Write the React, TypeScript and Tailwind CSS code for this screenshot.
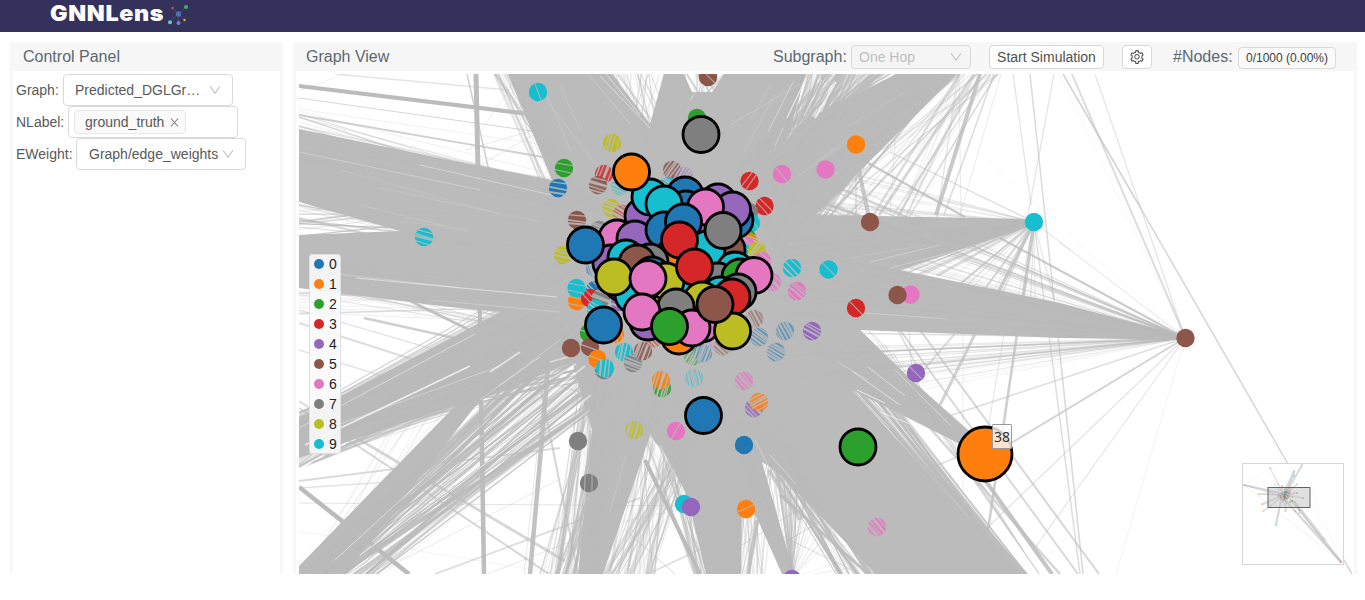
import React from "react";

const PALETTE = ["#1f77b4", "#ff7f0e", "#2ca02c", "#d62728", "#9467bd", "#8c564b", "#e377c2", "#7f7f7f", "#bcbd22", "#17becf"];
const EDGE = "#bbbbbb";

function createRandom(seed: number) {
  let s = seed;
  return () => {
    s = (s * 1664525 + 1013904223) % 4294967296;
    return s / 4294967296;
  };
}

type Line = [number, number, number, number, number, number];
type Segment = [number, number, number, number];

/* Edges running between random points of two segments. */
function bundle(a: Segment, b: Segment, count: number, seed: number, maxWidth = 2, maxOpacity = 0.8): Line[] {
  const r = createRandom(seed);
  for (let i = 0; i < 5; i++) r();
  return Array.from({ length: count }, () => {
    const t = r();
    const u = r();
    return [
      a[0] + (a[2] - a[0]) * t,
      a[1] + (a[3] - a[1]) * t,
      b[0] + (b[2] - b[0]) * u,
      b[1] + (b[3] - b[1]) * u,
      0.5 + r() * r() * maxWidth,
      0.15 + r() * maxOpacity,
    ] as Line;
  });
}

const MASSES = [
  "299,129 440,158 552,180 508,74 612,74 650,124 664,74 684,74 692,92 712,92 724,74 806,74 786,140 806,120 896,74 957,74 816,215 1034,219 1034,225 900,270 1060,303 1185,336 1185,340 1060,338 860,330 905,374 985,445 972,450 852,390 925,470 1020,574 876,574 778,472 762,462 794,574 782,574 757,518 742,500 741,574 706,574 688,498 668,458 650,436 603,574 578,574 592,430 572,362 480,400 345,574 299,574 299,566 456,405 299,458 299,418 500,312 440,306 299,288 299,235 400,231 299,202",
];

const LINES: Line[] = [
  ...bundle([299, 108, 299, 165], [600, 185, 600, 225], 34, 3, 2, 0.6),
  ...bundle([299, 198, 299, 240], [560, 190, 560, 285], 18, 4, 2.4),
  ...bundle([299, 250, 299, 315], [600, 280, 600, 350], 46, 5, 1.8, 0.6),
  ...bundle([299, 412, 299, 470], [600, 240, 600, 320], 70, 6, 3.4),
  ...bundle([299, 420, 299, 455], [610, 260, 610, 380], 60, 16, 3),
  ...bundle([235, 630, 290, 630], [590, 290, 600, 350], 60, 7, 4),
  ...bundle([240, 630, 315, 630], [610, 340, 610, 400], 55, 8, 3),
  ...bundle([230, 640, 310, 640], [420, 365, 470, 395], 14, 80, 1, 0.3),
  ...bundle([299, 470, 380, 425], [600, 320, 600, 380], 30, 84, 2.4, 0.5),
  ...bundle([555, 574, 603, 574], [580, 350, 660, 350], 48, 9, 4),
  ...bundle([540, 574, 575, 574], [585, 350, 610, 350], 12, 82, 2, 0.5),
  ...bundle([600, 574, 655, 574], [635, 400, 725, 400], 62, 10, 3, 0.5),
  ...bundle([692, 574, 712, 574], [630, 400, 680, 400], 26, 11, 3),
  ...bundle([738, 574, 765, 574], [725, 420, 785, 420], 22, 12, 2, 0.5),
  ...bundle([788, 574, 794, 574], [700, 380, 820, 420], 42, 13, 2, 0.7),
  ...bundle([791, 578, 792, 578], [780, 450, 870, 574], 16, 14, 1, 0.4),
  ...bundle([835, 574, 880, 574], [740, 420, 800, 450], 42, 15, 4),
  ...bundle([1010, 574, 1028, 574], [790, 330, 870, 370], 65, 17, 3),
  ...bundle([982, 448, 995, 465], [800, 270, 840, 380], 75, 18, 2, 0.7),
  ...bundle([960, 460, 1085, 640], [840, 300, 910, 370], 12, 19, 2, 0.5),
  ...bundle([1034, 222, 1034, 223], [770, 150, 780, 215], 14, 20, 1.2, 0.35),
  ...bundle([1034, 222, 1034, 223], [770, 215, 780, 345], 40, 85, 2, 0.5),
  ...bundle([1034, 222, 1034, 223], [900, 265, 1070, 315], 16, 21, 3, 0.5),
  ...bundle([1185, 338, 1185, 338], [770, 145, 770, 400], 66, 22, 2, 0.4),
  ...bundle([1185, 338, 1185, 338], [860, 330, 860, 402], 16, 23, 1, 0.35),
  ...bundle([955, 74, 1000, 74], [750, 235, 940, 250], 30, 24, 3, 0.45),
  ...bundle([915, 74, 958, 74], [760, 220, 830, 220], 60, 25, 2, 0.7),
  ...bundle([800, 74, 880, 74], [730, 170, 785, 260], 110, 26, 4, 0.7),
  ...bundle([750, 150, 790, 170], [830, 66, 940, 50], 34, 83, 3, 0.7),
  ...bundle([494, 74, 515, 74], [540, 190, 595, 210], 24, 27, 3, 0.6),
  ...bundle([608, 74, 666, 74], [620, 150, 680, 150], 32, 28, 2, 0.6),
  ...bundle([680, 74, 728, 74], [670, 115, 740, 115], 24, 29, 2, 0.6),
  ...bundle([855, 215, 870, 217], [780, 170, 830, 250], 10, 30, 1, 0.5),
  [299, 86, 545, 116, 4.2, 1], [299, 98, 560, 135, 1, 0.6], [335, 74, 508, 90, 1.5, 0.4],
  [299, 115, 560, 160, 1.8, 0.7], [299, 109, 560, 147, 0.7, 0.3], [345, 74, 299, 91, 1, 0.2],
  [476, 74, 479, 220, 5, 0.95], [479, 220, 480, 330, 4, 1], [480, 330, 484, 574, 4.5, 0.95],
  [467, 74, 491, 180, 1.5, 0.7], [520, 74, 478, 135, 1, 0.25], [480, 165, 560, 120, 1, 0.3],
  [465, 150, 545, 127, 1, 0.3], [299, 222, 365, 213, 2, 0.7], [299, 220, 398, 232, 2, 0.6],
  [299, 487, 409, 574, 4.5, 1], [548, 370, 530, 574, 4.5, 0.9],
  [350, 434, 565, 561, 2.8, 0.6], [340, 434, 549, 574, 2, 0.6], [540, 385, 578, 574, 2, 0.6],
  [299, 503, 699, 506, 1, 0.4], [299, 481, 560, 448, 1.8, 0.55], [299, 488, 420, 480, 1.6, 0.4],
  [435, 574, 640, 498, 2, 0.45], [375, 574, 558, 480, 1, 0.3], [480, 577, 620, 522, 1, 0.35],
  [299, 323, 430, 365, 2, 0.5], [364, 318, 600, 370, 2.4, 0.7], [299, 310, 580, 392, 1.4, 0.4],
  [299, 350, 440, 394, 1.4, 0.4], [299, 401, 355, 438, 2, 0.5], [299, 408, 350, 442, 1.8, 0.6],
  [524, 574, 545, 380, 1, 0.35], [299, 531, 558, 574, 1, 0.15], [400, 296, 490, 340, 3, 0.9],
  [980, 74, 936, 215, 4, 0.8], [974, 74, 879, 215, 2.5, 0.6], [994, 74, 944, 215, 1.6, 0.5],
  [1001, 74, 960, 215, 1, 0.3], [959, 74, 961, 216, 1, 0.3],
  [1013, 74, 1031, 205, 1.3, 0.4], [1030, 74, 1054, 300, 1.5, 0.55], [1054, 74, 1028, 215, 1.3, 0.4],
  [1063, 74, 1140, 207, 1.6, 0.65], [1140, 207, 1288, 464, 1.5, 0.6], [1288, 464, 1352, 574, 1.6, 0.6],
  [1072, 74, 1183, 332, 2, 0.5], [1095, 74, 1183, 332, 1.2, 0.4], [1059, 74, 1183, 332, 0.8, 0.15],
  [1060, 242, 1185, 338, 1, 0.4], [1034, 222, 1070, 250, 1, 0.4], [942, 120, 1185, 338, 0.7, 0.15],
  [868, 163, 965, 217, 2.2, 0.8], [1000, 238, 1185, 338, 2.2, 0.75], [890, 152, 1034, 222, 1.2, 0.5],
  [855, 152, 869, 218, 4, 0.8], [856, 152, 856, 218, 2, 0.4], [895, 140, 890, 216, 1, 0.3],
  [1034, 222, 1023, 298, 3.5, 0.75], [1034, 222, 999, 291, 3.5, 0.7], [1034, 222, 984, 290, 2, 0.6],
  [1034, 222, 1044, 300, 1.5, 0.5], [1034, 222, 1035, 300, 1, 0.35], [1034, 222, 960, 284, 2, 0.5],
  [1185, 338, 940, 419, 1.8, 0.45], [1185, 338, 1008, 445, 1.8, 0.65], [1185, 338, 988, 527, 1.2, 0.4],
  [1185, 338, 1035, 548, 1.1, 0.4], [1185, 338, 1116, 574, 1, 0.18], [1185, 338, 905, 385, 1, 0.35],
  [1049, 335, 1080, 574, 1.5, 0.5], [1058, 335, 1083, 574, 1.6, 0.55], [1017, 334, 988, 530, 2.6, 0.7],
  [1004, 334, 984, 453, 1, 0.4], [977, 330, 940, 405, 3, 0.65], [958, 330, 915, 380, 2, 0.5],
  [920, 330, 1099, 574, 2, 0.6], [900, 330, 1078, 574, 1.8, 0.6], [985, 480, 1052, 574, 4, 0.85],
  [905, 400, 1060, 574, 2.5, 0.6], [963, 330, 963, 490, 1, 0.25], [898, 330, 920, 372, 1.4, 0.6],
  [909, 330, 912, 372, 1, 0.5], [925, 470, 970, 452, 1.4, 0.5],
  [645, 460, 700, 574, 4, 1], [622, 522, 700, 505, 1, 0.3], [625, 530, 675, 574, 1, 0.5],
  [757, 520, 748, 574, 4, 0.8], [648, 574, 720, 540, 1.5, 0.5], [742, 545, 800, 508, 1, 0.5],
  [780, 495, 868, 574, 3, 0.9], [776, 470, 780, 560, 1, 0.5], [780, 545, 840, 510, 1.4, 0.5],
  [780, 535, 860, 574, 1, 0.5], [769, 470, 800, 520, 4, 0.7],
  [590, 430, 576, 574, 2, 0.6], [581, 430, 558, 574, 3, 0.6],
];

/* Thin gaps where the white background shows through the dense edges. */
const GAPS: Line[] = [
  [356, 278, 557, 297, 0.8, 0.65], [320, 272, 460, 288, 0.6, 0.4], [430, 300, 560, 312, 0.6, 0.4],
  [380, 188, 540, 222, 0.6, 0.22], [340, 170, 500, 214, 0.5, 0.2], [360, 205, 470, 232, 0.5, 0.25],
  [300, 152, 480, 190, 0.7, 0.4], [420, 165, 556, 196, 0.8, 0.45], [400, 222, 446, 226, 0.5, 0.2],
  [535, 85, 600, 170, 0.5, 0.25], [560, 85, 580, 130, 0.5, 0.25], [547, 95, 570, 150, 0.5, 0.3],
  [600, 76, 650, 128, 1, 0.5], [606, 74, 640, 115, 1, 0.5], [590, 76, 630, 124, 0.6, 0.4],
  [730, 125, 800, 84, 0.6, 0.3], [745, 150, 775, 95, 0.5, 0.3], [793, 82, 768, 132, 0.7, 0.5],
  [770, 86, 750, 120, 0.5, 0.3], [690, 100, 700, 86, 1, 0.4], [797, 177, 850, 137, 0.5, 0.3],
  [806, 78, 787, 118, 1.2, 0.7], [836, 82, 815, 118, 2, 0.7], [822, 80, 804, 116, 0.9, 0.6], [783, 128, 775, 146, 0.7, 0.5],
  [820, 160, 865, 132, 0.5, 0.25], [850, 125, 905, 92, 0.5, 0.2], [865, 313, 948, 319, 0.6, 0.4],
  [850, 258, 925, 245, 0.5, 0.25], [870, 262, 940, 245, 0.7, 0.4], [890, 268, 960, 250, 0.7, 0.4],
  [838, 362, 868, 380, 0.6, 0.5], [852, 371, 900, 405, 0.9, 0.6], [868, 367, 905, 396, 0.8, 0.6],
  [895, 370, 950, 425, 0.8, 0.5], [868, 405, 890, 428, 0.9, 0.6], [857, 390, 885, 403, 1, 0.7],
  [880, 412, 910, 424, 1, 0.6], [755, 440, 770, 470, 0.8, 0.4], [770, 455, 796, 484, 0.7, 0.5],
  [626, 455, 610, 512, 0.6, 0.3], [660, 445, 686, 500, 0.8, 0.5], [650, 434, 661, 455, 0.8, 0.5],
  [305, 445, 470, 366, 1.5, 0.75], [299, 428, 475, 334, 0.9, 0.5], [340, 424, 500, 366, 0.8, 0.4],
  [335, 560, 490, 418, 0.8, 0.6], [360, 555, 540, 424, 1, 0.7], [410, 495, 520, 405, 0.8, 0.4],
  [490, 372, 520, 352, 1.6, 0.6], [499, 386, 540, 357, 0.9, 0.5], [550, 362, 575, 355, 1.5, 0.5],
  [549, 380, 576, 364, 2, 0.5], [552, 392, 585, 366, 1.6, 0.5], [555, 424, 591, 395, 2, 0.5],
  [549, 440, 590, 410, 1.2, 0.4], [480, 400, 560, 340, 0.7, 0.4],
];

/* x, y, class, then optional stripe angle and number of stripes */
type Dot = [number, number, number, number?, number?];
const DOTS: Dot[] = [
  [538, 92, 9, 70, 1], [708, 77, 5, 45, 1], [697, 118, 2], [612, 143, 8, 105, 4], [564, 168, 2, 10, 2],
  [558, 188, 0, 8, 3], [620, 186, 9, 20, 7], [604, 174, 3, 110, 5], [598, 185, 5, 15, 5], [672, 170, 5, 125, 5],
  [684, 176, 4, 120, 8], [668, 186, 9, 30, 5], [749.5, 181, 3, 125, 2], [782, 174, 6, 50, 1], [825.5, 169.5, 6],
  [856, 144.5, 1], [870, 222, 5], [1034, 222, 9], [764.5, 206, 3, 45, 2], [424, 237, 9, 15, 4],
  [611, 208, 8, 20, 5], [622, 214, 3, 30, 7], [577, 220, 5, 5, 3], [599, 230, 7, 20, 5], [563, 255, 8, 12, 4],
  [595, 268, 0, 70, 7], [749, 212, 7], [751, 223, 9, 60, 2], [747, 238, 2, 35, 4], [749, 242, 1, 20, 5],
  [746, 246, 6, 40, 4], [742, 252, 9, 20, 3], [757, 251, 8, 130, 3], [762, 261, 6, 40, 3], [772, 282, 6, 45, 5],
  [792, 268, 9, 45, 3], [828.5, 269.5, 9, 45, 1], [797, 291, 6, 40, 4], [856, 308, 3, 45, 1], [910.5, 294.5, 6], [897.5, 295, 5],
  [1185.5, 338, 5], [916, 373, 4, 45, 1], [595, 290, 0, 45, 3], [577, 301, 1, 10, 2], [590, 298, 3, 45, 2],
  [601, 298, 7, 20, 4], [576.5, 288, 9, 10, 2], [596, 309, 9, 30, 3], [620, 302, 4, 20, 3], [589, 333, 2, 20, 1],
  [590, 347, 5, 20, 1], [571, 348, 5], [615, 334, 1, 80, 4], [597.5, 359, 1, 20, 1], [604, 370, 7, 20, 4],
  [605, 368, 9, 95, 3], [624, 352, 9, 100, 4], [633, 363, 7, 20, 5], [643, 351, 5, 110, 6], [654, 338, 3, 45, 8],
  [754, 319, 5, 60, 7], [718, 341, 6, 50, 7], [723, 346, 5, 40, 8], [693, 356, 2, 120, 8], [703, 353, 0, 110, 9],
  [759, 337, 0, 35, 8], [785, 331, 0, 60, 7], [776, 352, 0, 30, 8], [812, 331, 4, 28, 4],
  [662, 388, 2, 105, 6], [661, 380, 1, 105, 5], [694, 378, 9, 75, 10], [744, 381, 6, 50, 6], [634, 430, 8, 105, 6],
  [676, 431, 6, 120, 1], [754, 408, 4, 45, 5], [759, 402, 1, 150, 5], [744, 445, 0], [578, 441, 7],
  [589, 483, 7, 90, 2], [684, 504, 9], [691, 507, 4], [746, 509, 1, 155, 1], [877, 527, 6, 50, 6], [792, 579, 4],
];

const SELECTED: [number, number, number, number?][] = [
  [675, 235, 3], [655, 300, 8], [700, 250, 1], [718, 260, 5], [640, 287, 5], [690, 312, 9],
  [685, 195, 0], [718, 202, 4], [735, 220, 0], [686, 209, 0], [727, 250, 5], [643, 216, 4], [732.5, 210, 4],
  [650, 197, 9], [664, 204, 9], [693, 232, 4], [705.5, 207, 6], [617, 238, 6], [611, 263, 4], [635, 239, 4],
  [664, 230, 0], [683.5, 222, 0], [673, 257, 1], [707, 249, 9], [723, 230.5, 7], [679.5, 240, 3], [631.5, 172, 1],
  [701, 134.5, 7], [585.5, 245, 0], [626, 258, 9], [650, 262, 7], [622, 283, 5], [637, 263, 5],
  [735, 270, 9], [718, 281, 7], [740, 277, 2], [754, 275.5, 6], [720, 295, 9],
  [633, 295, 9], [614, 277, 8], [677, 292, 9], [652, 275, 0], [666, 281, 8], [648, 278.5, 6],
  [694.5, 267, 3], [702, 300, 8], [738, 292, 7], [732, 297, 3], [679, 336, 1], [648, 322, 4], [702, 324, 6],
  [676, 307, 7], [692, 328, 6], [642, 312, 6], [669.5, 326.5, 2], [732.5, 331, 8], [715, 304.5, 5],
  [603.5, 325, 0], [703.5, 415.5, 0], [858, 447, 2], [985, 454, 1, 27],
];

function drawLines(lines: Line[], color: string) {
  return lines.map(([x1, y1, x2, y2, w, o], i) => (
    <line key={i} x1={x1} y1={y1} x2={x2} y2={y2} stroke={color} strokeWidth={w} strokeOpacity={o} />
  ));
}

function NodeDot({ dot, id }: { dot: Dot; id: string }) {
  const [x, y, c, angle, stripes = 0] = dot;
  const step = 18 / (stripes + 1);
  const opacity = stripes > 6 ? 0.55 : stripes > 4 ? 0.85 : 1;
  return (
    <g>
      <circle cx={x} cy={y} r={9.2} fill={PALETTE[c]} opacity={opacity} />
      {stripes > 0 && (
        <g clipPath={`url(#${id})`}>
          <clipPath id={id}>
            <circle cx={x} cy={y} r={9.6} />
          </clipPath>
          {Array.from({ length: stripes }, (_, i) => {
            const offset = -9 + step * (i + 1) + ((i * 7 + x) % 3) * 0.7 - 0.7;
            return (
              <line
                key={i}
                x1={x - 11}
                x2={x + 11}
                y1={y + offset}
                y2={y + offset + (i % 2)}
                stroke={EDGE}
                strokeOpacity={0.85}
                strokeWidth={stripes > 2 ? 1.2 + (i % 3) * 0.4 : 1}
                transform={`rotate(${angle} ${x} ${y})`}
              />
            );
          })}
        </g>
      )}
    </g>
  );
}

const MINI_RAYS: Line[] = [
  [1288, 495, 1244, 485, 2, 0.6], [1288, 498, 1244, 485, 1, 0.4], [1284, 495, 1270, 468, 1.5, 0.4],
  [1285, 495, 1302, 465, 2, 0.55], [1284, 495, 1294, 472, 3, 0.6], [1284, 495, 1258, 494, 1.5, 0.6],
  [1284, 495, 1263, 504, 2, 0.5], [1284, 495, 1264, 511, 1.5, 0.5], [1282, 495, 1276, 525, 2, 0.6],
  [1284, 495, 1286, 511, 2, 0.5], [1284, 495, 1297, 484, 2, 0.4], [1284, 495, 1303, 498, 1.5, 0.5],
  [1284, 495, 1297, 493, 2, 0.5], [1244, 485, 1341, 562, 0.7, 0.25], [1285, 500, 1341, 562, 2, 0.6],
  [1292, 500, 1341, 562, 3, 0.45], [1287, 495, 1341, 562, 1, 0.5], [1296, 504, 1325, 541, 3.5, 0.3],
  [1270, 468, 1244, 485, 0.5, 0.2], [1302, 465, 1341, 562, 0.5, 0.15],
];

function MiniMap() {
  const r = createRandom(77);
  const core = Array.from({ length: 110 }, () => [1284 + (r() + r() - 1) * 7, 495 + (r() + r() - 1) * 8, Math.floor(r() * 10)]);
  const outer = [[1244, 485, 7], [1270, 468, 7], [1302, 465, 1], [1294, 471, 0], [1294, 476, 9], [1258, 494, 8], [1262, 504, 3], [1263, 511, 1], [1276, 525, 9], [1341, 562, 3], [1275, 485, 9], [1278, 484, 6], [1297, 484, 6], [1282, 486, 3], [1297, 493, 2], [1303, 498, 7], [1285, 511, 1], [1295, 511, 1], [1299, 510, 2], [1299, 513, 9], [1292, 497, 6], [1292, 501, 3], [1295, 502, 1], [1290, 502, 2], [1290, 490, 1]];
  return (
    <g>
      <rect x={1242.5} y={463.5} width={101} height={101} fill="#fff" fillOpacity={0.9} stroke="#d5d5d5" />
      {drawLines(MINI_RAYS, EDGE)}
      <rect x={1268} y={487.5} width={42} height={20} fill="#bbbbbb" fillOpacity={0.45} stroke="#626262" />
      {core.map(([x, y, c], i) => (
        <rect key={i} x={x - 0.5} y={y - 0.5} width={1.1} height={1.1} fill={PALETTE[c]} opacity={0.4} />
      ))}
      {outer.map(([x, y, c], i) => (
        <rect key={i} x={x - 0.5} y={y - 0.5} width={1.2} height={1.2} fill={PALETTE[c]} opacity={0.75} />
      ))}
    </g>
  );
}

function GraphCanvas() {
  return (
    <svg className="block" width="1055" height="500" viewBox="299 74 1055 500">
      {MASSES.map((points, i) => (
        <polygon key={i} points={points} fill={EDGE} />
      ))}
      {drawLines(LINES, EDGE)}
      {drawLines(GAPS, "#ffffff")}
      {DOTS.map((dot, i) => (
        <NodeDot key={i} dot={dot} id={`dot-${i}`} />
      ))}
      {SELECTED.map(([x, y, c, r = 18], i) => (
        <circle key={i} cx={x} cy={y} r={r} fill={PALETTE[c]} stroke="#000" strokeWidth={2.8} />
      ))}
      <MiniMap />
    </svg>
  );
}

function Chevron() {
  return (
    <svg className="shrink-0" width="12" height="12" viewBox="0 0 12 12" fill="none" stroke="#bfbfbf" strokeWidth="1.1">
      <path d="M1.2 2.5 6 9.2l4.8-6.7" />
    </svg>
  );
}

function Gear() {
  return (
    <svg width="14" height="14" viewBox="64 64 896 896" fill="#505050">
      <path d="M924.8 625.7l-65.5-56c3.1-19 4.7-38.4 4.7-57.8s-1.6-38.8-4.7-57.8l65.5-56a32.03 32.03 0 0 0 9.3-35.2l-.9-2.6a443.74 443.74 0 0 0-79.7-137.9l-1.8-2.1a32.12 32.12 0 0 0-35.1-9.5l-81.3 28.9c-30-24.6-63.5-44-99.7-57.6l-15.7-85a32.05 32.05 0 0 0-25.8-25.7l-2.7-.5c-52.1-9.4-106.9-9.4-159 0l-2.7.5a32.05 32.05 0 0 0-25.8 25.7l-15.8 85.4a351.86 351.86 0 0 0-99 57.4l-81.9-29.1a32 32 0 0 0-35.1 9.5l-1.8 2.1a446.02 446.02 0 0 0-79.7 137.9l-.9 2.6c-4.5 12.5-.8 26.5 9.3 35.2l66.3 56.6c-3.1 18.8-4.6 38-4.6 57.1 0 19.2 1.5 38.4 4.6 57.1L99 625.5a32.03 32.03 0 0 0-9.3 35.2l.9 2.6c18.1 50.4 44.9 96.9 79.7 137.9l1.8 2.1a32.12 32.12 0 0 0 35.1 9.5l81.9-29.1c29.8 24.5 63.1 43.9 99 57.4l15.8 85.4a32.05 32.05 0 0 0 25.8 25.7l2.7.5a449.4 449.4 0 0 0 159 0l2.7-.5a32.05 32.05 0 0 0 25.8-25.7l15.7-85a350 350 0 0 0 99.7-57.6l81.3 28.9a32 32 0 0 0 35.1-9.5l1.8-2.1c34.8-41.1 61.6-87.5 79.7-137.9l.9-2.6c4.5-12.3.8-26.3-9.3-35zM788.3 465.9c2.5 15.1 3.8 30.6 3.8 46.1s-1.3 31-3.8 46.1l-6.6 40.1 74.7 63.9a370.03 370.03 0 0 1-42.6 73.6L721 702.8l-31.4 25.8c-23.9 19.6-50.5 35-79.3 45.8l-38.1 14.3-17.9 97a377.5 377.5 0 0 1-85 0l-17.9-97.2-37.8-14.5c-28.5-10.8-55-26.2-78.7-45.7l-31.4-25.9-93.4 33.2c-17-22.9-31.2-47.6-42.6-73.6l75.5-64.5-6.5-40c-2.4-14.9-3.7-30.3-3.7-45.5 0-15.3 1.2-30.6 3.7-45.5l6.5-40-75.5-64.5c11.3-26.1 25.6-50.7 42.6-73.6l93.4 33.2 31.4-25.9c23.7-19.5 50.2-34.9 78.7-45.7l37.9-14.3 17.9-97.2c28.1-3.2 56.8-3.2 85 0l17.9 97 38.1 14.3c28.7 10.8 55.4 26.2 79.3 45.8l31.4 25.8 92.8-32.9c17 22.9 31.2 47.6 42.6 73.6L781.8 426l6.5 39.9zM512 326c-97.2 0-176 78.8-176 176s78.8 176 176 176 176-78.8 176-176-78.8-176-176-176zm79.2 255.2A111.6 111.6 0 0 1 512 614c-29.9 0-58-11.7-79.2-32.8A111.6 111.6 0 0 1 400 502c0-29.9 11.7-58 32.8-79.2C454 401.6 482.1 390 512 390c29.9 0 58 11.6 79.2 32.8A111.6 111.6 0 0 1 624 502c0 29.9-11.7 58-32.8 79.2z" />
    </svg>
  );
}

function Logo() {
  return (
    <svg className="mt-[4px] shrink-0" width="22" height="22" viewBox="167 4 22 22">
      <path d="M172.5 8l6 6 7.5-7M178.5 14l-8.5 8M178.5 14v9M178.5 14l6 6" fill="none" stroke="#55657d" strokeWidth="0.5" />
      <circle cx="172.5" cy="8" r="1.2" fill="#cf554d" />
      <circle cx="186" cy="7" r="2" fill="#45ad68" />
      <circle cx="178.5" cy="14" r="2.7" fill="#4472b8" />
      <circle cx="170" cy="22.3" r="2" fill="#57d1b5" />
      <circle cx="178.5" cy="23" r="2" fill="#7184c7" />
      <circle cx="184.5" cy="20" r="1.2" fill="#e7b515" />
    </svg>
  );
}

export default function App() {
  return (
    <div className="h-[600px] w-[1365px] overflow-hidden bg-white font-['Liberation_Sans',Arial,sans-serif] text-sm text-[#595959]">
      <header className="flex h-8 items-start bg-[#34325c] pl-[50px]">
        <h1 className="w-[117px] shrink-0 origin-left scale-x-[1.06] whitespace-nowrap font-['Inter',sans-serif] text-[22px] leading-[27px] font-black tracking-[0.6px] text-white">GNNLens</h1>
        <Logo />
      </header>
      <main className="flex gap-[10px] pt-[10px] pl-[10px]">
        <section className="h-[532px] w-[273px] border-x-[3px] border-[#f7f7f7]">
          <h2 className="h-[29px] bg-[#f7f7f7] pl-[10px] text-base leading-[29px] text-[#5c6870]">Control Panel</h2>
          <div className="flex flex-col pt-[3px] pl-[3px]">
            <div className="flex h-8 items-center">
              <span className="w-[47px]">Graph:</span>
              <div className="flex h-8 w-[170px] items-center justify-between rounded border border-[#d9d9d9] pr-[11px] pl-[11px]">
                <span>Predicted_DGLGr…</span>
                <Chevron />
              </div>
            </div>
            <div className="flex h-8 items-center">
              <span className="w-[52px]">NLabel:</span>
              <div className="flex h-8 w-[170px] items-center rounded border border-[#d9d9d9] pl-[5px]">
                <div className="flex h-6 w-[112px] items-center rounded-sm border border-[#e8e8e8] bg-[#fafafa] pl-[10px]">
                  <span>ground_truth</span>
                  <svg className="ml-[6px]" width="9" height="9" viewBox="0 0 9 9" stroke="#808080" strokeWidth="1.1">
                    <path d="M1 .5 8 8.5M8 .5 1 8.5" />
                  </svg>
                </div>
              </div>
            </div>
            <div className="flex h-8 items-center">
              <span className="w-[60px]">EWeight:</span>
              <div className="flex h-8 w-[170px] items-center justify-between rounded border border-[#d9d9d9] pr-[11px] pl-3">
                <span>Graph/edge_weights</span>
                <Chevron />
              </div>
            </div>
          </div>
        </section>
        <section className="h-[532px] w-[1064px] border-x-[3px] border-[#f7f7f7]">
          <div className="flex h-[29px] items-center bg-[#f7f7f7] pl-[10px] text-base text-[#5c6870]">
            <h2 className="w-[467px]">Graph View</h2>
            <span className="w-[78px]">Subgraph:</span>
            <div className="flex h-6 w-[120px] items-center justify-between rounded border border-[#d9d9d9] bg-[#f5f5f5] pr-[8px] pl-[7px] text-sm text-[#bfbfbf]">
              <span>One Hop</span>
              <Chevron />
            </div>
            <button className="ml-[18px] h-6 w-[115px] rounded border border-[#d9d9d9] bg-white text-sm leading-[22px] text-[#505050]">Start Simulation</button>
            <button className="ml-[18px] flex h-6 w-[30px] items-center justify-center rounded border border-[#d9d9d9] bg-white">
              <Gear />
            </button>
            <span className="ml-[21px] w-[65px]">#Nodes:</span>
            <span className="mt-[2px] h-[22px] w-[98px] rounded border border-[#d9d9d9] bg-[#fafafa] text-center text-xs leading-5 text-[#404040]">0/1000 (0.00%)</span>
          </div>
          <div className="relative mt-[3px] ml-[3px]">
            <GraphCanvas />
            <ul className="absolute top-[180px] left-[10px] h-[200px] w-8 rounded-[3px] border border-[#e0e0e0] bg-[#fafafa]/90 text-[#222]">
              {PALETTE.map((color, i) => (
                <li key={color} className="-mt-px mb-px flex h-5 items-center gap-[5px] pl-[4px]">
                  <svg width="10" height="10" viewBox="0 0 10 10">
                    <circle cx="5" cy="5" r="5" fill={color} />
                  </svg>
                  <span>{i}</span>
                </li>
              ))}
            </ul>
            <div className="absolute top-[350px] left-[693px] h-[25px] w-[20px] rounded-[1px] border border-[#999] bg-white/80 text-center font-['Noto_Sans',sans-serif] text-sm leading-[24px] text-[#333]">38</div>
          </div>
        </section>
      </main>
    </div>
  );
}
